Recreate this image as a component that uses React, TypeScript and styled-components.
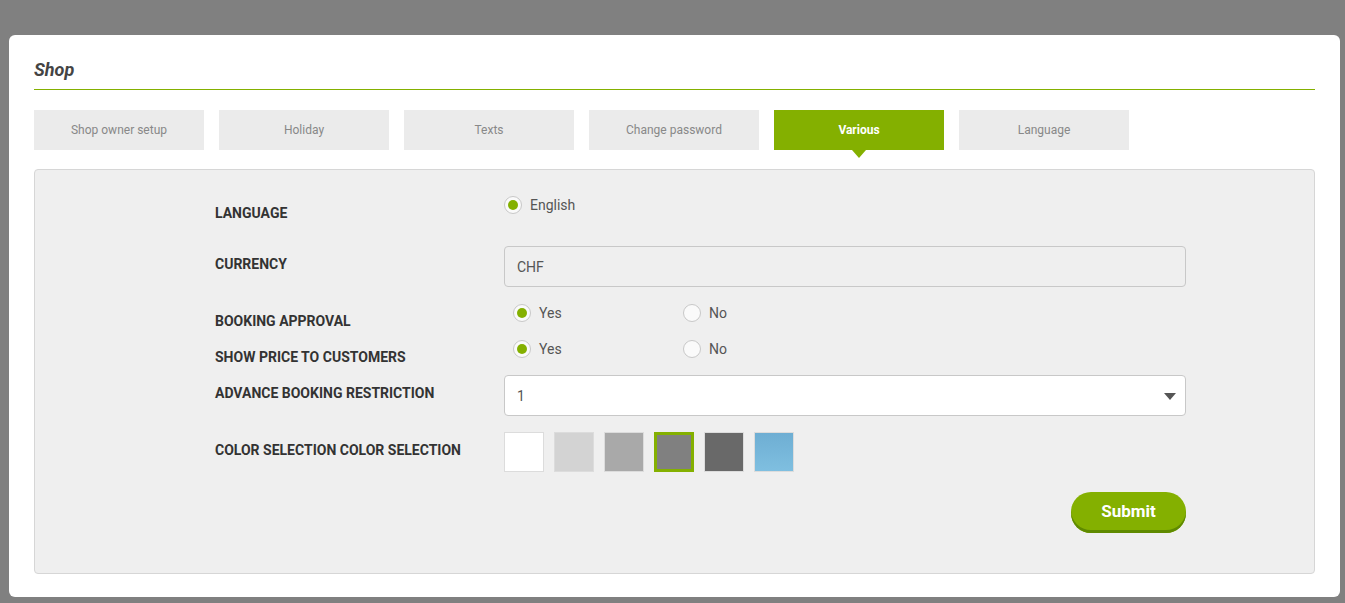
import React from "react";
import styled, { createGlobalStyle } from "styled-components";

const GREEN = "#84b000";

const Global = createGlobalStyle`
  html, body { margin: 0; padding: 0; background: #808080; }
  body { font-family: Roboto, "Liberation Sans", Arial, sans-serif; }
  * { box-sizing: border-box; }
`;

const Backdrop = styled.div`
  width: 1345px;
  height: 603px;
  padding: 35px 5px 6px 9px;
  background: #808080;
  overflow: hidden;
`;

const Modal = styled.div`
  background: #fff;
  border-radius: 6px;
  height: 562px;
  padding: 24px 25px 0 25px;
  display: flex;
  flex-direction: column;
`;

const Header = styled.div`
  border-bottom: 1px solid ${GREEN};
  padding-bottom: 8px;
`;

const Title = styled.h2`
  margin: 0;
  font-size: 18px;
  line-height: 22px;
  font-weight: 700;
  font-style: italic;
  color: #444;
`;

const Tabs = styled.div`
  display: flex;
  gap: 15px;
  margin-top: 20px;
`;

const Tab = styled.div<{ $active?: boolean }>`
  position: relative;
  width: 170px;
  height: 40px;
  display: flex;
  align-items: center;
  justify-content: center;
  font-size: 12px;
  color: ${(p) => (p.$active ? "#fff" : "#888")};
  font-weight: ${(p) => (p.$active ? 700 : 400)};
  background: ${(p) => (p.$active ? GREEN : "#ebebeb")};
  &::after {
    content: "";
    display: ${(p) => (p.$active ? "block" : "none")};
    position: absolute;
    left: 50%;
    top: 100%;
    margin-left: -7px;
    border-left: 7px solid transparent;
    border-right: 7px solid transparent;
    border-top: 8px solid ${GREEN};
  }
`;

const Panel = styled.div`
  margin-top: 19px;
  height: 405px;
  background: #efefef;
  border: 1px solid #d6d6d6;
  border-radius: 4px;
  padding: 26px 128px 0 180px;
  display: flex;
  flex-direction: column;
`;

const Row = styled.div<{ $mt?: number; $h: number }>`
  display: flex;
  align-items: flex-start;
  height: ${(p) => p.$h}px;
  margin-top: ${(p) => p.$mt ?? 0}px;
`;

const Label = styled.div<{ $pt?: number }>`
  width: 289px;
  flex: none;
  padding-top: ${(p) => p.$pt ?? 9}px;
  font-size: 14px;
  line-height: 16px;
  font-weight: 700;
  color: #333;
  text-transform: uppercase;
`;

const Control = styled.div`
  flex: 1;
  display: flex;
  align-items: center;
`;

const RadioGroup = styled.div<{ $indent?: number }>`
  display: flex;
  padding-left: ${(p) => p.$indent ?? 0}px;
`;

const RadioItem = styled.label<{ $w?: number }>`
  display: flex;
  align-items: center;
  gap: 8px;
  width: ${(p) => (p.$w ? `${p.$w}px` : "auto")};
  font-size: 14px;
  line-height: 18px;
  color: #555;
`;

const RadioCircle = styled.span<{ $on?: boolean }>`
  width: 18px;
  height: 18px;
  border-radius: 50%;
  border: 1px solid #c8c8c8;
  background: #fafafa;
  display: flex;
  align-items: center;
  justify-content: center;
  flex: none;
  &::after {
    content: "";
    display: ${(p) => (p.$on ? "block" : "none")};
    width: 10px;
    height: 10px;
    border-radius: 50%;
    background: ${GREEN};
  }
`;

const Field = styled.div<{ $white?: boolean }>`
  position: relative;
  width: 100%;
  height: 41px;
  border: 1px solid #c8c8c8;
  border-radius: 4px;
  background: ${(p) => (p.$white ? "#fff" : "#efefef")};
  padding: 0 12px;
  display: flex;
  align-items: center;
  font-size: 14px;
  color: #555;
`;

const Caret = styled.span`
  position: absolute;
  right: 9px;
  top: 17px;
  border-left: 6px solid transparent;
  border-right: 6px solid transparent;
  border-top: 7px solid #555;
`;

const Swatches = styled.div`
  display: flex;
  gap: 10px;
`;

const Swatch = styled.div<{ $bg: string; $selected?: boolean }>`
  width: 40px;
  height: 40px;
  background: ${(p) => p.$bg};
  border: ${(p) => (p.$selected ? `3px solid ${GREEN}` : "1px solid #dcdcdc")};
`;

const Actions = styled.div`
  display: flex;
  justify-content: flex-end;
  margin-top: 20px;
`;

const SubmitButton = styled.button`
  width: 115px;
  height: 41px;
  border: none;
  border-radius: 20px;
  background: ${GREEN};
  box-shadow: inset 0 -3px 0 #5f8a00;
  color: #fff;
  font-family: Roboto, "Liberation Sans", Arial, sans-serif;
  font-size: 17px;
  font-weight: 700;
  padding: 0 0 3px;
  cursor: pointer;
`;

const tabs = ["Shop owner setup", "Holiday", "Texts", "Change password", "Various", "Language"];
const colors = [
  "#ffffff",
  "#d3d3d3",
  "#a9a9a9",
  "#808080",
  "#696969",
  "linear-gradient(#6eaed3, #7fbfe0)",
];

export default function App() {
  return (
    <>
      <Global />
      <Backdrop>
        <Modal>
          <Header>
            <Title>Shop</Title>
          </Header>
          <Tabs>
            {tabs.map((t) => (
              <Tab key={t} $active={t === "Various"}>
                {t}
              </Tab>
            ))}
          </Tabs>
          <Panel>
            <Row $h={18}>
              <Label>Language</Label>
              <Control>
                <RadioItem>
                  <RadioCircle $on />
                  English
                </RadioItem>
              </Control>
            </Row>
            <Row $h={41} $mt={32}>
              <Label $pt={10}>Currency</Label>
              <Control>
                <Field>CHF</Field>
              </Control>
            </Row>
            <Row $h={18} $mt={17}>
              <Label>Booking approval</Label>
              <Control>
                <RadioGroup $indent={9}>
                  <RadioItem $w={170}>
                    <RadioCircle $on />
                    Yes
                  </RadioItem>
                  <RadioItem>
                    <RadioCircle />
                    No
                  </RadioItem>
                </RadioGroup>
              </Control>
            </Row>
            <Row $h={18} $mt={18}>
              <Label>Show price to customers</Label>
              <Control>
                <RadioGroup $indent={9}>
                  <RadioItem $w={170}>
                    <RadioCircle $on />
                    Yes
                  </RadioItem>
                  <RadioItem>
                    <RadioCircle />
                    No
                  </RadioItem>
                </RadioGroup>
              </Control>
            </Row>
            <Row $h={41} $mt={17}>
              <Label $pt={10}>Advance booking restriction</Label>
              <Control>
                <Field $white>
                  1
                  <Caret />
                </Field>
              </Control>
            </Row>
            <Row $h={40} $mt={16}>
              <Label $pt={10}>Color selection Color selection</Label>
              <Control>
                <Swatches>
                  {colors.map((c, i) => (
                    <Swatch key={i} $bg={c} $selected={i === 3} />
                  ))}
                </Swatches>
              </Control>
            </Row>
            <Actions>
              <SubmitButton>Submit</SubmitButton>
            </Actions>
          </Panel>
        </Modal>
      </Backdrop>
    </>
  );
}
